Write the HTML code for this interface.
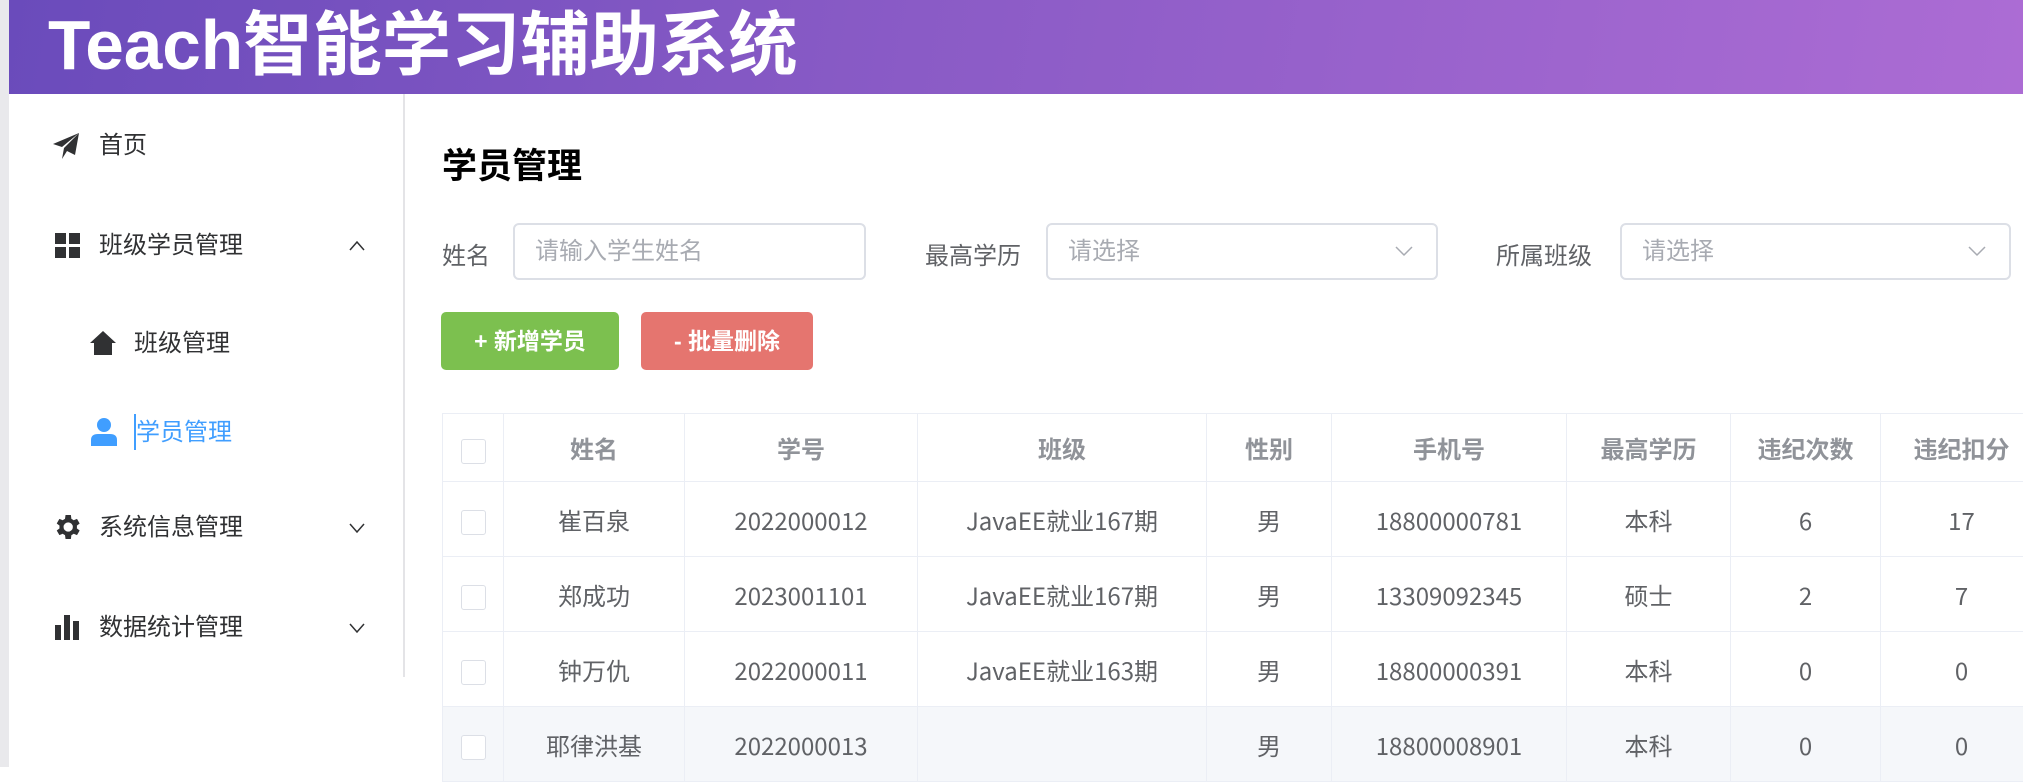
<!DOCTYPE html>
<html><head><meta charset="utf-8"><style>
*{margin:0;padding:0;box-sizing:border-box}
body{width:2023px;height:767px;overflow:hidden;background:#fff;font-family:"Liberation Sans","Noto Sans CJK SC",sans-serif;position:relative}
.hdr{position:absolute;left:9px;top:0;width:2014px;height:94px;background:linear-gradient(100deg,#6a4bbb 0%,#8a5bc6 45%,#ac6cd4 100%)}
.edge{position:absolute;left:0;top:0;width:9px;height:767px;background:#e9e9ec}
.title{position:absolute;left:48px;top:2px;color:#fff;font-size:70px;font-weight:bold;line-height:86px;font-family:"Liberation Sans","WenQuanYi Zen Hei","Noto Sans CJK SC",sans-serif;transform:scaleX(0.99);transform-origin:0 0;white-space:nowrap}
.side{position:absolute;left:9px;top:94px;width:396px;height:583px;border-right:2px solid #e4e4e7}
.mi{position:absolute;font-size:24px;color:#303133;line-height:30px}
.arr{position:absolute;left:347px;width:20px;height:20px}
.lbl{position:absolute;font-size:24px;color:#606266;top:236px}
.inp{position:absolute;top:223px;height:57px;border:2px solid #dcdfe6;border-radius:6px;font-size:24px;color:#a8abb2;padding-left:20px;line-height:53px}
.inp svg{position:absolute;right:22px;top:19px}
.btn{position:absolute;top:312px;height:58px;border-radius:5px;color:#fff;font-size:23px;font-weight:bold;text-align:center;line-height:58px}
table{position:absolute;left:442px;top:413px;border-collapse:collapse;table-layout:fixed;width:1600px;font-family:"Noto Sans CJK SC",sans-serif}
td,th{border:1px solid #ebeef5;text-align:center;font-size:24px;color:#606266;font-weight:normal;overflow:hidden;white-space:nowrap;font-family:"Noto Sans CJK SC",sans-serif}
th{height:68px;color:#909399;font-weight:bold}
td{height:75px}
tr.hv td{background:#f5f7fa}
.cb{display:inline-block;width:25px;height:25px;border:1px solid #dcdfe6;border-radius:3px;background:#fff;vertical-align:middle}
</style></head><body>
<div class="edge"></div>
<div class="hdr"></div>
<div class="title">Teach智能学习辅助系统</div>
<div class="side"></div>
<svg style="position:absolute;left:53px;top:133px" width="27" height="26" viewBox="0 0 27 26"><path d="M26 0 L0 11 L9 14 L26 0 L11 15 L9 26 L14 18 L22 22 Z" fill="#303133"/></svg>
<div class="mi" style="left:99px;top:131px">首页</div>
<svg style="position:absolute;left:55px;top:233px" width="25" height="25"><rect x="0" y="0" width="11" height="11" fill="#303133"/><rect x="14" y="0" width="11" height="11" fill="#303133"/><rect x="0" y="14" width="11" height="11" fill="#303133"/><rect x="14" y="14" width="11" height="11" fill="#303133"/></svg>
<div class="mi" style="left:99px;top:231px">班级学员管理</div>
<svg class="arr" style="top:236px" viewBox="0 0 20 20"><path d="M3 14 L10 6 L17 14" stroke="#303133" stroke-width="1.5" fill="none"/></svg>
<svg style="position:absolute;left:90px;top:330px" width="26" height="26" viewBox="0 0 26 26"><path d="M13 1 L26 13 L22 13 L22 25 L4 25 L4 13 L0 13 Z" fill="#303133"/></svg>
<div class="mi" style="left:134px;top:329px">班级管理</div>
<svg style="position:absolute;left:91px;top:418px" width="26" height="28" viewBox="0 0 26 28"><circle cx="13" cy="7" r="7" fill="#409eff"/><path d="M0 28 L0 22 Q0 16 7 16 L19 16 Q26 16 26 22 L26 28 Z" fill="#409eff"/></svg>
<div style="position:absolute;left:134px;top:414px;width:2px;height:36px;background:#409eff"></div>
<div class="mi" style="left:136px;top:418px;color:#409eff">学员管理</div>
<svg style="position:absolute;left:51px;top:511px" width="32" height="32" viewBox="0 0 24 24"><path fill="#303133" d="M19.4 13a7.5 7.5 0 0 0 0-2l2.1-1.6-2-3.5-2.5 1a7 7 0 0 0-1.7-1L14.9 3h-4l-.4 2.9a7 7 0 0 0-1.7 1l-2.5-1-2 3.5L6.4 11a7.5 7.5 0 0 0 0 2l-2.1 1.6 2 3.5 2.5-1a7 7 0 0 0 1.7 1l.4 2.9h4l.4-2.9a7 7 0 0 0 1.7-1l2.5 1 2-3.5zM12.9 15.5a3.5 3.5 0 1 1 0-7 3.5 3.5 0 0 1 0 7z"/></svg>
<div class="mi" style="left:99px;top:513px">系统信息管理</div>
<svg class="arr" style="top:518px" viewBox="0 0 20 20"><path d="M3 6 L10 14 L17 6" stroke="#303133" stroke-width="1.5" fill="none"/></svg>
<svg style="position:absolute;left:55px;top:615px" width="25" height="25"><rect x="0" y="10" width="6" height="15" fill="#303133"/><rect x="9" y="0" width="6" height="25" fill="#303133"/><rect x="18" y="6" width="6" height="19" fill="#303133"/></svg>
<div class="mi" style="left:99px;top:613px">数据统计管理</div>
<svg class="arr" style="top:618px" viewBox="0 0 20 20"><path d="M3 6 L10 14 L17 6" stroke="#303133" stroke-width="1.5" fill="none"/></svg>

<div style="position:absolute;left:442px;top:138px;font-size:35px;font-weight:bold;color:#000">学员管理</div>
<div class="lbl" style="left:442px">姓名</div>
<div class="inp" style="left:513px;width:353px">请输入学生姓名</div>
<div class="lbl" style="left:925px">最高学历</div>
<div class="inp" style="left:1046px;width:392px">请选择<svg width="20" height="14" viewBox="0 0 20 14"><path d="M2 3 L10 11 L18 3" stroke="#a8abb2" stroke-width="1.5" fill="none"/></svg></div>
<div class="lbl" style="left:1496px">所属班级</div>
<div class="inp" style="left:1620px;width:391px">请选择<svg width="20" height="14" viewBox="0 0 20 14"><path d="M2 3 L10 11 L18 3" stroke="#a8abb2" stroke-width="1.5" fill="none"/></svg></div>
<div class="btn" style="left:441px;width:178px;background:#7cc04f">+ 新增学员</div>
<div class="btn" style="left:641px;width:172px;background:#e5756f">- 批量删除</div>

<table>
<colgroup><col style="width:61px"><col style="width:181px"><col style="width:233px"><col style="width:289px"><col style="width:125px"><col style="width:235px"><col style="width:164px"><col style="width:150px"><col style="width:162px"></colgroup>
<tr><th><span class="cb"></span></th><th>姓名</th><th>学号</th><th>班级</th><th>性别</th><th>手机号</th><th>最高学历</th><th>违纪次数</th><th>违纪扣分</th></tr>
<tr><td><span class="cb"></span></td><td>崔百泉</td><td>2022000012</td><td>JavaEE就业167期</td><td>男</td><td>18800000781</td><td>本科</td><td>6</td><td>17</td></tr>
<tr><td><span class="cb"></span></td><td>郑成功</td><td>2023001101</td><td>JavaEE就业167期</td><td>男</td><td>13309092345</td><td>硕士</td><td>2</td><td>7</td></tr>
<tr><td><span class="cb"></span></td><td>钟万仇</td><td>2022000011</td><td>JavaEE就业163期</td><td>男</td><td>18800000391</td><td>本科</td><td>0</td><td>0</td></tr>
<tr class="hv"><td><span class="cb"></span></td><td>耶律洪基</td><td>2022000013</td><td></td><td>男</td><td>18800008901</td><td>本科</td><td>0</td><td>0</td></tr>
</table>
</body></html>
